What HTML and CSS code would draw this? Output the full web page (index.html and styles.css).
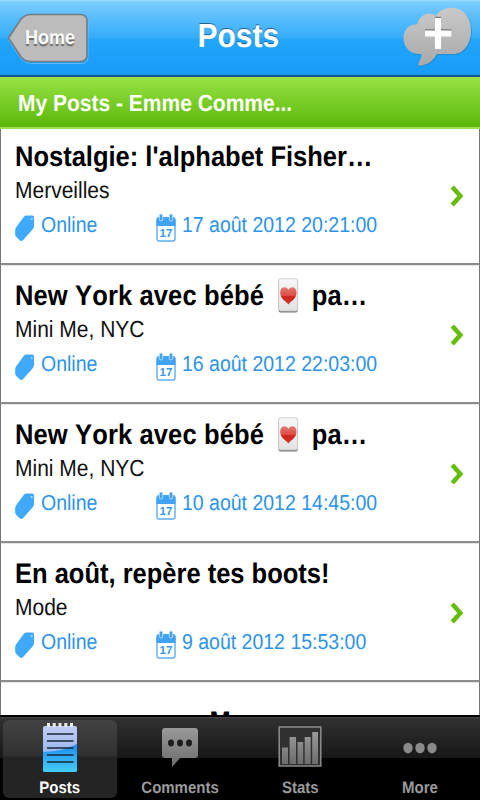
FILE: index.html
```html
<!DOCTYPE html>
<html lang="fr">
<head>
    <meta charset="UTF-8">
    <meta name="viewport" content="width=device-width, initial-scale=1.0">
    <title>Posts</title>
    <link rel="stylesheet" href="styles.css">
</head>
<body>
    <svg class="defs" width="0" height="0">
        <defs>
            <linearGradient id="gray" x1="0" y1="0" x2="0" y2="1">
                <stop offset="0" stop-color="#9a9a9a"/>
                <stop offset="1" stop-color="#6c6c6c"/>
            </linearGradient>
            <linearGradient id="cloud" x1="0" y1="0" x2="0" y2="1">
                <stop offset="0" stop-color="#c9c9c9"/>
                <stop offset="1" stop-color="#a9a9a9"/>
            </linearGradient>
            <linearGradient id="paper" x1="0" y1="0" x2="0" y2="1">
                <stop offset="0" stop-color="#c2ccf3"/>
                <stop offset="1" stop-color="#78a9ee"/>
            </linearGradient>
            <linearGradient id="water" x1="0" y1="0" x2="0" y2="1">
                <stop offset="0" stop-color="#1c8cf0"/>
                <stop offset="1" stop-color="#43cdf8"/>
            </linearGradient>
            <linearGradient id="card" x1="0" y1="0" x2="0" y2="1">
                <stop offset="0" stop-color="#f8f8f8"/>
                <stop offset="1" stop-color="#e2e2e2"/>
            </linearGradient>
            <linearGradient id="heart" x1="0" y1="0" x2="0" y2="1">
                <stop offset="0" stop-color="#e07a74"/>
                <stop offset="0.5" stop-color="#dc4a40"/>
                <stop offset="0.55" stop-color="#cc2219"/>
                <stop offset="1" stop-color="#d6382e"/>
            </linearGradient>
            <symbol id="icon-tag" viewBox="0 0 22 30">
                <path d="M9.500 3 Q10.500 2 12 2 H18 Q20.200 2 20 4.500 V12.500 Q20 14.500 18.800 16 L8.300 27.800 Q6.500 29.500 4.800 27.800 L1 24 Q0 23 .2 21 V17.500 Q.2 15.500 1.400 14 Z" fill="#3fa9fa"/>
                <circle cx="17.600" cy="5.600" r="1" fill="#bfe1fd"/>
            </symbol>
            <symbol id="icon-calendar" viewBox="0 0 20 29">
                <rect x="1" y="6" width="18" height="22" rx="2" fill="#fff" stroke="#5fadf0" stroke-width="1.4"/>
                <path d="M.5 13 V6 Q.5 4 3 4 H17 Q19.500 4 19.500 6 V13 Z" fill="#3fa2f2"/>
                <rect x="3.300" y="1" width="3.400" height="7" rx="1.600" fill="#3fa2f2" stroke="#d5eafd" stroke-width=".8"/>
                <rect x="13.300" y="1" width="3.400" height="7" rx="1.600" fill="#3fa2f2" stroke="#d5eafd" stroke-width=".8"/>
                <text x="10" y="24" class="calendar-day">17</text>
            </symbol>
            <symbol id="icon-chevron" viewBox="0 0 14 24">
                <path d="M2.300 3 L10.300 12 L2.300 21" fill="none" stroke="#66bd0c" stroke-width="4.600"/>
            </symbol>
            <symbol id="icon-heart" viewBox="0 0 22 35">
                <rect x=".8" y="1.500" width="20" height="33" rx="2" fill="#777"/>
                <rect x=".8" y=".8" width="20" height="32.200" rx="2" fill="url(#card)" stroke="#c4c4c4" stroke-width=".8"/>
                <path d="M11 26.500 C8.500 23 2.500 21 2.500 14.500 C2.500 8.500 9 7.500 11 12 C13 7.500 19.500 8.500 19.500 14.500 C19.500 21 13.500 23 11 26.500 Z" fill="url(#heart)"/>
            </symbol>
        </defs>
    </svg>

    <div class="app">
        <header class="navbar">
            <a class="back">
                <svg class="back-shape" width="84" height="52" viewBox="0 0 84 52">
                    <path d="M1.500 26 L14 7 Q18 2.500 24 2.500 H75 Q81 2.500 81 9 V43 Q81 49.500 75 49.500 H24 Q18 49.500 14 45 Z" fill="none" stroke="#8ccbf8" stroke-opacity=".6" transform="translate(0 1)"/>
                    <path d="M1.500 25 L14 6 Q18 1.500 24 1.500 H73 Q80 1.500 80 8 V42 Q80 48.500 73 48.500 H24 Q18 48.500 14 44 Z" fill="#bcbcbc" stroke="#747b82" stroke-width="1.600"/>
                </svg>
                <span class="squeeze back-label">Home</span>
            </a>
            <h1 class="squeeze navbar-title">Posts</h1>
            <svg class="add" width="70" height="62" viewBox="0 0 70 62">
                <path d="M19 58.500 C14 60 15 55.500 17 53.500 Q19 50 18.500 47 C8 48 .5 41 .5 31 C.5 22 7 16.500 14 17.500 C17 7 26 4 33 8.500 C37 3 43 .8 49 .8 C60 .8 68 10 68 23 C68 37 61 47 50 47 H34 Q29 56.500 19 58.500 Z" fill="#2779b5" opacity=".6" transform="translate(.8 .8)"/>
                <path d="M19 58.500 C14 60 15 55.500 17 53.500 Q19 50 18.500 47 C8 48 .5 41 .5 31 C.5 22 7 16.500 14 17.500 C17 7 26 4 33 8.500 C37 3 43 .8 49 .8 C60 .8 68 10 68 23 C68 37 61 47 50 47 H34 Q29 56.500 19 58.500 Z" fill="url(#cloud)"/>
                <path d="M32 11 H38 V23.500 H48.500 V29.500 H38 V42 H32 V29.500 H22 V23.500 H32 Z" fill="#777" transform="translate(0 -1.200)"/>
                <path d="M32 11 H38 V23.500 H48.500 V29.500 H38 V42 H32 V29.500 H22 V23.500 H32 Z" fill="#fff"/>
            </svg>
        </header>

        <div class="section-bar"><span class="squeeze">My Posts - Emme Comme...</span></div>

        <ul class="posts">
            <li class="post">
                <div class="post-body">
                    <h2 class="squeeze">Nostalgie: l'alphabet Fisher…</h2>
                    <p class="squeeze category">Merveilles</p>
                    <div class="meta">
                        <svg class="tag"><use href="#icon-tag"/></svg>
                        <span class="status"><span class="squeeze">Online</span></span>
                        <svg class="calendar"><use href="#icon-calendar"/></svg>
                        <span class="squeeze">17 août 2012 20:21:00</span>
                    </div>
                </div>
                <svg class="chevron"><use href="#icon-chevron"/></svg>
            </li>
            <li class="post">
                <div class="post-body">
                    <h2 class="squeeze with-heart">New York avec bébé <svg class="heart" preserveAspectRatio="none" viewBox="0 0 22 35"><use href="#icon-heart" width="22" height="35"/></svg> pa…</h2>
                    <p class="squeeze category">Mini Me, NYC</p>
                    <div class="meta">
                        <svg class="tag"><use href="#icon-tag"/></svg>
                        <span class="status"><span class="squeeze">Online</span></span>
                        <svg class="calendar"><use href="#icon-calendar"/></svg>
                        <span class="squeeze">16 août 2012 22:03:00</span>
                    </div>
                </div>
                <svg class="chevron"><use href="#icon-chevron"/></svg>
            </li>
            <li class="post">
                <div class="post-body">
                    <h2 class="squeeze with-heart">New York avec bébé <svg class="heart" preserveAspectRatio="none" viewBox="0 0 22 35"><use href="#icon-heart" width="22" height="35"/></svg> pa…</h2>
                    <p class="squeeze category">Mini Me, NYC</p>
                    <div class="meta">
                        <svg class="tag"><use href="#icon-tag"/></svg>
                        <span class="status"><span class="squeeze">Online</span></span>
                        <svg class="calendar"><use href="#icon-calendar"/></svg>
                        <span class="squeeze">10 août 2012 14:45:00</span>
                    </div>
                </div>
                <svg class="chevron"><use href="#icon-chevron"/></svg>
            </li>
            <li class="post">
                <div class="post-body">
                    <h2 class="squeeze">En août, repère tes boots!</h2>
                    <p class="squeeze category">Mode</p>
                    <div class="meta">
                        <svg class="tag"><use href="#icon-tag"/></svg>
                        <span class="status"><span class="squeeze">Online</span></span>
                        <svg class="calendar"><use href="#icon-calendar"/></svg>
                        <span class="squeeze">9 août 2012 15:53:00</span>
                    </div>
                </div>
                <svg class="chevron"><use href="#icon-chevron"/></svg>
            </li>
            <li class="post load-more"><span class="squeeze">More</span></li>
        </ul>

        <nav class="tabbar">
            <a class="tab active">
                <svg width="36" height="52" viewBox="0 0 36 52">
                    <rect x="1" y="4" width="34" height="46" rx="2" fill="url(#paper)"/>
                    <path d="M1 30 Q22 29 35 22 V48 Q35 50 33 50 H3 Q1 50 1 48 Z" fill="url(#water)"/>
                    <path d="M6.500 1 V5 M12.200 1 V5 M18 1 V5 M23.800 1 V5 M29.500 1 V5" stroke="#e8e8f0" stroke-width="3"/>
                    <path d="M5 12 H31.500 M5 19 H31.500 M5 26 H31.500 M5 33 H31.500 M5 40 H31.500" stroke="#17273a" stroke-width="1.500"/>
                </svg>
                <span class="squeeze">Posts</span>
            </a>
            <a class="tab">
                <svg width="36" height="52" viewBox="0 0 36 52">
                    <path d="M3 6 H33 Q36 6 36 9 V33 Q36 36 33 36 H18 L10 45 V36 H3 Q0 36 0 33 V9 Q0 6 3 6 Z" fill="url(#gray)"/>
                    <g fill="#1c1c1c">
                        <ellipse cx="9" cy="21" rx="3" ry="3.400"/>
                        <ellipse cx="18" cy="21" rx="3" ry="3.400"/>
                        <ellipse cx="27" cy="21" rx="3" ry="3.400"/>
                    </g>
                </svg>
                <span class="squeeze">Comments</span>
            </a>
            <a class="tab">
                <svg width="44" height="52" viewBox="0 0 44 52">
                    <rect x="1.200" y="5" width="41.600" height="39" fill="#303030" stroke="#8d8d8d" stroke-width="1.500"/>
                    <path d="M4 42 V25.500 H10 V42 Z M11.600 42 V15 H18 V42 Z M19.500 42 V20 H25.200 V42 Z M26.700 42 V15 H32.700 V42 Z M34.200 42 V10 H40 V42 Z" fill="url(#gray)"/>
                </svg>
                <span class="squeeze">Stats</span>
            </a>
            <a class="tab">
                <svg width="36" height="52" viewBox="0 0 36 52">
                    <g fill="#8a8a8a">
                        <ellipse cx="6" cy="26" rx="4.700" ry="5.200"/>
                        <ellipse cx="18" cy="26" rx="4.700" ry="5.200"/>
                        <ellipse cx="30" cy="26" rx="4.700" ry="5.200"/>
                    </g>
                </svg>
                <span class="squeeze">More</span>
            </a>
        </nav>
    </div>
</body>
</html>
```
FILE: styles.css
```css
body {
    margin: 0;
    font-family: "Liberation Sans", Arial, sans-serif;
    font-kerning: none;
    text-rendering: geometricPrecision;
    background: #fff;
    overflow: hidden;
}

h1, h2, p, ul {
    margin: 0;
    padding: 0;
}

.defs {
    position: absolute;
}

.app {
    width: 480px;
    height: 800px;
    display: flex;
    flex-direction: column;
    overflow: hidden;
}

/* narrow letters */
.squeeze {
    display: inline-block;
    white-space: nowrap;
    transform: scaleX(0.9);
    transform-origin: left center;
}

.navbar {
    flex: none;
    box-sizing: border-box;
    height: 77px;
    padding: 0 8px 0 7px;
    display: grid;
    grid-template-columns: 84px 1fr 70px;
    align-items: start;
    background: linear-gradient(#a0ddff 0, #7dcdff 2px, #60c0fe 14px, #35adfb 38px, #22a5fb 39px, #179cf9 74px);
    border-bottom: 2px solid #17538a;
}

.back {
    display: grid;
    margin-top: 13px;
}

.back-shape, .back-label {
    grid-area: 1 / 1;
}

.back-label {
    margin-left: 18px;
    font-size: 20px;
    font-weight: bold;
    line-height: 50px;
    color: #fff;
    text-shadow: 0 1.5px 1px #666;
}

.navbar-title {
    justify-self: center;
    margin-right: 17px;
    font-size: 33.3px;
    line-height: 74px;
    color: #fff;
    text-shadow: 0 -1.5px 0 #24638f;
    transform-origin: center;
}

.add {
    margin: 7px 0 0 1px;
}

.section-bar {
    flex: none;
    box-sizing: border-box;
    height: 52px;
    padding-left: 18px;
    font-size: 23.33px;
    font-weight: bold;
    line-height: 52px;
    color: #fff;
    background: linear-gradient(#97e343, #5bb70a);
    border-bottom: 2px solid #98e04c;
}

.posts {
    flex: 1;
    min-height: 0;
    overflow: hidden;
    list-style: none;
}

.post {
    box-sizing: border-box;
    height: 139px;
    padding: 14px 15px 0 14px;
    display: flex;
    justify-content: space-between;
    border: 1px solid #777;
    border-top: none;
    border-bottom: 2px solid #8d8d8d;
    box-shadow: inset 0 1px 0 #e4e4e4;
}

.post:first-child {
    height: 136px;
    padding-top: 11px;
    box-shadow: none;
}

.post-body > * {
    display: block;
    line-height: 34px;
    height: 34px;
}

.post h2 {
    font-size: 28.33px;
    color: #000;
}

.post .with-heart {
    letter-spacing: 0.15px;
}

.post-body .category {
    font-size: 23.33px;
    line-height: 33px;
    color: #111;
}

.post-body .meta {
    display: flex;
    font-size: 21.67px;
    color: #2c93ea;
}

.status {
    width: 115px;
    margin-left: 5px;
}

.tag {
    width: 21px;
    height: 30px;
    margin-top: 5px;
}

.calendar {
    width: 20px;
    height: 29px;
    margin: 5px 6px 0 0;
}

.calendar-day {
    font-size: 11.5px;
    font-weight: bold;
    text-anchor: middle;
    fill: #3c98e6;
}

.heart {
    width: 23.5px;
    height: 35px;
    margin: -6px 6.5px 0 7px;
    vertical-align: -8px;
}

.chevron {
    flex: none;
    width: 14px;
    height: 24px;
    margin-top: 44px;
}

.post.load-more {
    justify-content: center;
    padding-top: 24px;
    font-size: 28.33px;
    font-weight: bold;
    line-height: 32px;
}

.load-more .squeeze {
    transform-origin: center;
}

.tabbar {
    flex: none;
    box-sizing: border-box;
    height: 85px;
    padding: 3px 0;
    display: grid;
    grid-template-columns: repeat(4, 120px);
    background: linear-gradient(#000 0, #000 2px, #484848 2px, #303030 4px, #171717 43px, #000 43px);
}

.tab {
    display: flex;
    flex-direction: column;
    align-items: center;
    padding-top: 4px;
    font-size: 16.67px;
    font-weight: bold;
    line-height: 20px;
    color: #9a9a9a;
}

.tab .squeeze {
    transform-origin: center;
    margin-top: 4px;
}

.tab.active {
    margin: 2px 3px 0;
    padding-top: 2px;
    border-radius: 6px;
    color: #fff;
    background: linear-gradient(#434343, #303030 36px, #242424 37px, #242424);
}
```
